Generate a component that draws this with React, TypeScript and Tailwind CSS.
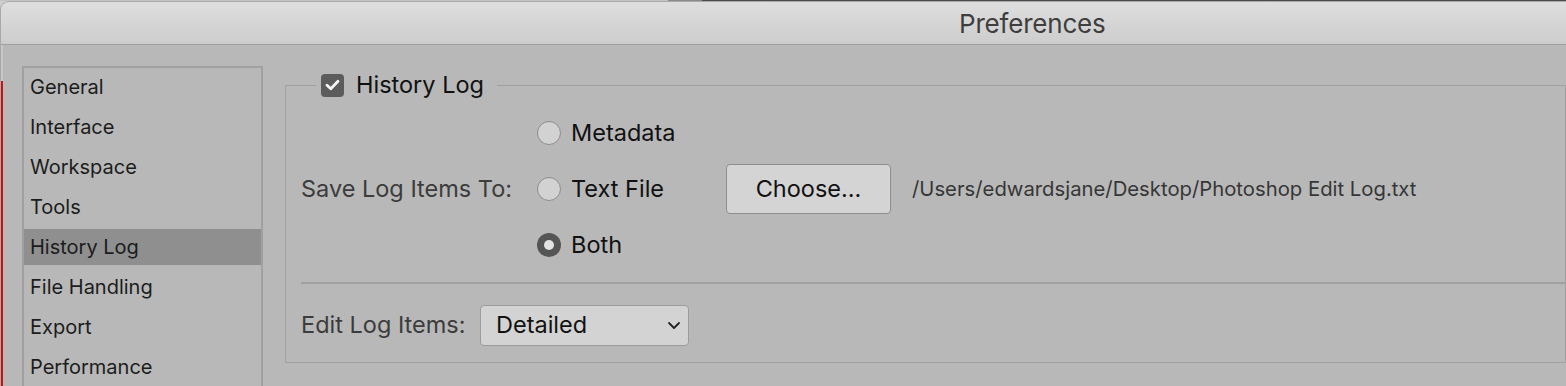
import React from "react";

const items = [
  "General",
  "Interface",
  "Workspace",
  "Tools",
  "History Log",
  "File Handling",
  "Export",
  "Performance",
];

function Radio({ checked, label }: { checked?: boolean; label: string }) {
  return (
    <div className="flex items-center gap-[10px]">
      {checked ? (
        <div className="w-[24px] h-[24px] rounded-full bg-[#555555] flex items-center justify-center">
          <div className="w-[10px] h-[10px] rounded-full bg-[#e2e2e2]" />
        </div>
      ) : (
        <div className="w-[24px] h-[24px] rounded-full bg-[#d2d2d2] border-[1.5px] border-[#8c8c8c]" />
      )}
      <span className="text-[23.5px] text-[#111111] leading-none">{label}</span>
    </div>
  );
}

export default function App() {
  return (
    <div
      className="w-[1566px] h-[386px] overflow-hidden bg-[#cfcfcf] flex flex-col"
      style={{ fontFamily: "Inter, 'Liberation Sans', sans-serif" }}
    >
      <div className="flex h-[1px] shrink-0">
        <div className="w-[668px] bg-[#c4c4c4]" />
        <div className="w-[34px] bg-[#8a8a8a]" />
        <div className="flex-1 bg-[#4a4a4a]" />
      </div>
      <div className="flex-1 flex flex-col rounded-tl-[9px] border-t border-l border-[#a9a9a9] bg-[#b8b8b8] overflow-hidden">
        <div className="h-[43px] shrink-0 bg-gradient-to-b from-[#dedede] to-[#cdcdcd] border-b-[1.5px] border-[#a0a0a0] flex items-center pl-[958px]">
          <span className="text-[26px] text-[#3e3e3e] tracking-[-0.2px]">Preferences</span>
        </div>
        <div className="flex-1 flex">
          <div className="w-[2px] flex flex-col shrink-0">
            <div className="h-[36px] bg-[#c8c8c8]" />
            <div className="flex-1 bg-[#c41414]" />
          </div>
          <div className="ml-[19px] mt-[21px] w-[241px] shrink-0 border-2 border-b-0 border-[#a1a1a1] pt-[1px] flex flex-col gap-[4px]">
            {items.map((it) => (
              <div
                key={it}
                className={
                  "h-[36px] shrink-0 flex items-center pl-[6px] text-[20px] text-[#1c1c1c] " +
                  (it === "History Log" ? "bg-[#8f8f8f]" : "")
                }
              >
                {it}
              </div>
            ))}
          </div>
          <fieldset className="ml-[22px] mt-[27px] w-[1400px] self-start border-[1.5px] border-[#a0a0a0] pl-[15px] pb-[16px]">
            <legend className="ml-[15px] px-[5px] h-[26px] flex items-center gap-[12px]">
              <div className="w-[23px] h-[23px] rounded-[4px] bg-[#5c5c5c] flex items-center justify-center">
                <svg width="15" height="12" viewBox="0 0 15 12">
                  <path d="M2 6.2 L5.8 9.8 L13 2.2" fill="none" stroke="#f4f4f4" strokeWidth="2.8" strokeLinecap="round" strokeLinejoin="round" />
                </svg>
              </div>
              <span className="text-[23.5px] text-[#111111] pr-[8px]">History Log</span>
            </legend>
            <div className="pt-[7px] grid grid-cols-[236px_189px_186px_1fr] auto-rows-[56px] items-center">
              <div />
              <Radio label="Metadata" />
              <div />
              <div />
              <div className="text-[23.5px] text-[#3c3c3c]">Save Log Items To:</div>
              <Radio label="Text File" />
              <div className="w-[165px] h-[50px] rounded-[4px] border-[1.5px] border-[#8e8e8e] bg-[#d4d4d4] flex items-center justify-center text-[23.5px] text-[#111111]">
                Choose...
              </div>
              <div className="text-[20.3px] text-[#363636]">/Users/edwardsjane/Desktop/Photoshop Edit Log.txt</div>
              <div />
              <Radio checked label="Both" />
              <div />
              <div />
            </div>
            <div className="mt-[9px] h-[1.5px] bg-[#a0a0a0]" />
            <div className="mt-[21px] flex items-center">
              <div className="w-[179px] text-[23.5px] text-[#3c3c3c]">Edit Log Items:</div>
              <div className="w-[209px] h-[41px] rounded-[4px] border-[1.5px] border-[#9c9c9c] bg-[#d3d3d3] flex items-center justify-between pl-[15px] pr-[7px]">
                <span className="text-[23.5px] text-[#111111]">Detailed</span>
                <svg width="14" height="9" viewBox="0 0 14 9">
                  <path d="M2 2 L7 7 L12 2" fill="none" stroke="#222" strokeWidth="1.8" strokeLinecap="round" strokeLinejoin="round" />
                </svg>
              </div>
            </div>
          </fieldset>
        </div>
      </div>
    </div>
  );
}
